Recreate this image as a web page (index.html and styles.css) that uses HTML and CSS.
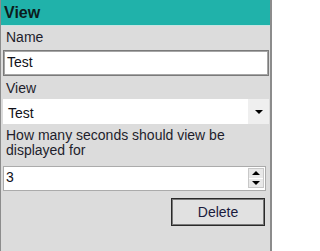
FILE: index.html
```html
<!DOCTYPE html>
<html>
<head>
<meta charset="utf-8">
<link rel="stylesheet" href="styles.css">
</head>
<body>
<div class="window">
  <div class="header">View</div>
  <div class="body">
    <div class="label">Name</div>
    <div class="textbox">Test</div>
    <div class="label label-view">View</div>
    <div class="combo">
      <div class="combo-text">Test</div>
      <div class="combo-btn"><span class="arrow-down"></span></div>
    </div>
    <div class="label label-seconds">How many seconds should view be displayed for</div>
    <div class="numeric">
      <div class="numeric-text">3</div>
      <div class="spinner">
        <div class="spin spin-up"><span class="arrow-up"></span></div>
        <div class="spin spin-down"><span class="arrow-down small"></span></div>
      </div>
    </div>
    <div class="button-row">
      <div class="button">Delete</div>
    </div>
  </div>
</div>
</body>
</html>
```
FILE: styles.css
```css
html, body {
  margin: 0;
  padding: 0;
  background: #ffffff;
}

.window {
  width: 272px;
  height: 251px;
  box-sizing: border-box;
  border-left: 1px solid #8c8c8c;
  border-right: 2px solid #8c8c8c;
  background: #dcdcdc;
  font-family: "Liberation Sans", Arial, sans-serif;
  overflow: hidden;
}

.header {
  height: 25px;
  background: #20b2aa;
  border-bottom: 1px solid #c6e4e1;
  padding-left: 3px;
  font-size: 16px;
  font-weight: bold;
  line-height: 25px;
  color: #0c1c1c;
}

.body {
  display: flex;
  flex-direction: column;
  padding: 4px 1px 0 2px;
}

.label {
  margin-left: 3px;
  font-size: 14px;
  line-height: 15px;
  color: #1e1e2c;
}

.label-view {
  margin-top: 5px;
}

.label-seconds {
  margin-top: 4px;
  margin-right: 4px;
}

.textbox {
  margin-top: 5px;
  height: 26px;
  box-sizing: border-box;
  border: 1px solid #7a7a7a;
  box-shadow: inset 0 0 0 1px #a6a6a6;
  background: #ffffff;
  padding-left: 3px;
  font-size: 14px;
  line-height: 22px;
  color: #101018;
}

.combo {
  margin-top: 3px;
  height: 25px;
  display: flex;
  background: #ffffff;
}

.combo-text {
  flex: 1;
  padding: 4px 0 0 5px;
  font-size: 14px;
  line-height: 20px;
  color: #101018;
}

.combo-btn {
  width: 21px;
  background: #efefef;
  display: flex;
  align-items: center;
  justify-content: center;
}

.arrow-down {
  width: 0;
  height: 0;
  border-left: 4px solid transparent;
  border-right: 4px solid transparent;
  border-top: 4px solid #000000;
  margin-top: 1px;
}

.arrow-up {
  width: 0;
  height: 0;
  border-left: 4px solid transparent;
  border-right: 4px solid transparent;
  border-bottom: 4px solid #000000;
}

.numeric {
  margin-top: 8px;
  margin-right: 3px;
  height: 25px;
  box-sizing: border-box;
  border: 1px solid #ababab;
  background: #ffffff;
  display: flex;
  padding: 1px 1px 2px 0;
}

.numeric-text {
  flex: 1;
  padding-left: 2px;
  font-size: 14px;
  line-height: 19px;
  color: #101018;
}

.spinner {
  width: 14px;
  display: flex;
  flex-direction: column;
  border: 1px solid #c8c8c8;
}

.spin {
  flex: 1;
  background: #e8e8e8;
  display: flex;
  align-items: center;
  justify-content: center;
}

.spin-up {
  border-bottom: 1px solid #ffffff;
}

.spin-down .arrow-down {
  margin-top: 0;
}

.button-row {
  display: flex;
  justify-content: flex-end;
  margin-top: 7px;
  padding-right: 4px;
}

.button {
  width: 94px;
  height: 28px;
  box-sizing: border-box;
  border: 1px solid #2a2a2a;
  box-shadow: inset 0 0 0 1px #7a7a7a;
  background: #e1e1e1;
  text-align: center;
  padding-top: 3px;
  font-size: 14px;
  line-height: 21px;
  color: #1a1a3c;
}
```
